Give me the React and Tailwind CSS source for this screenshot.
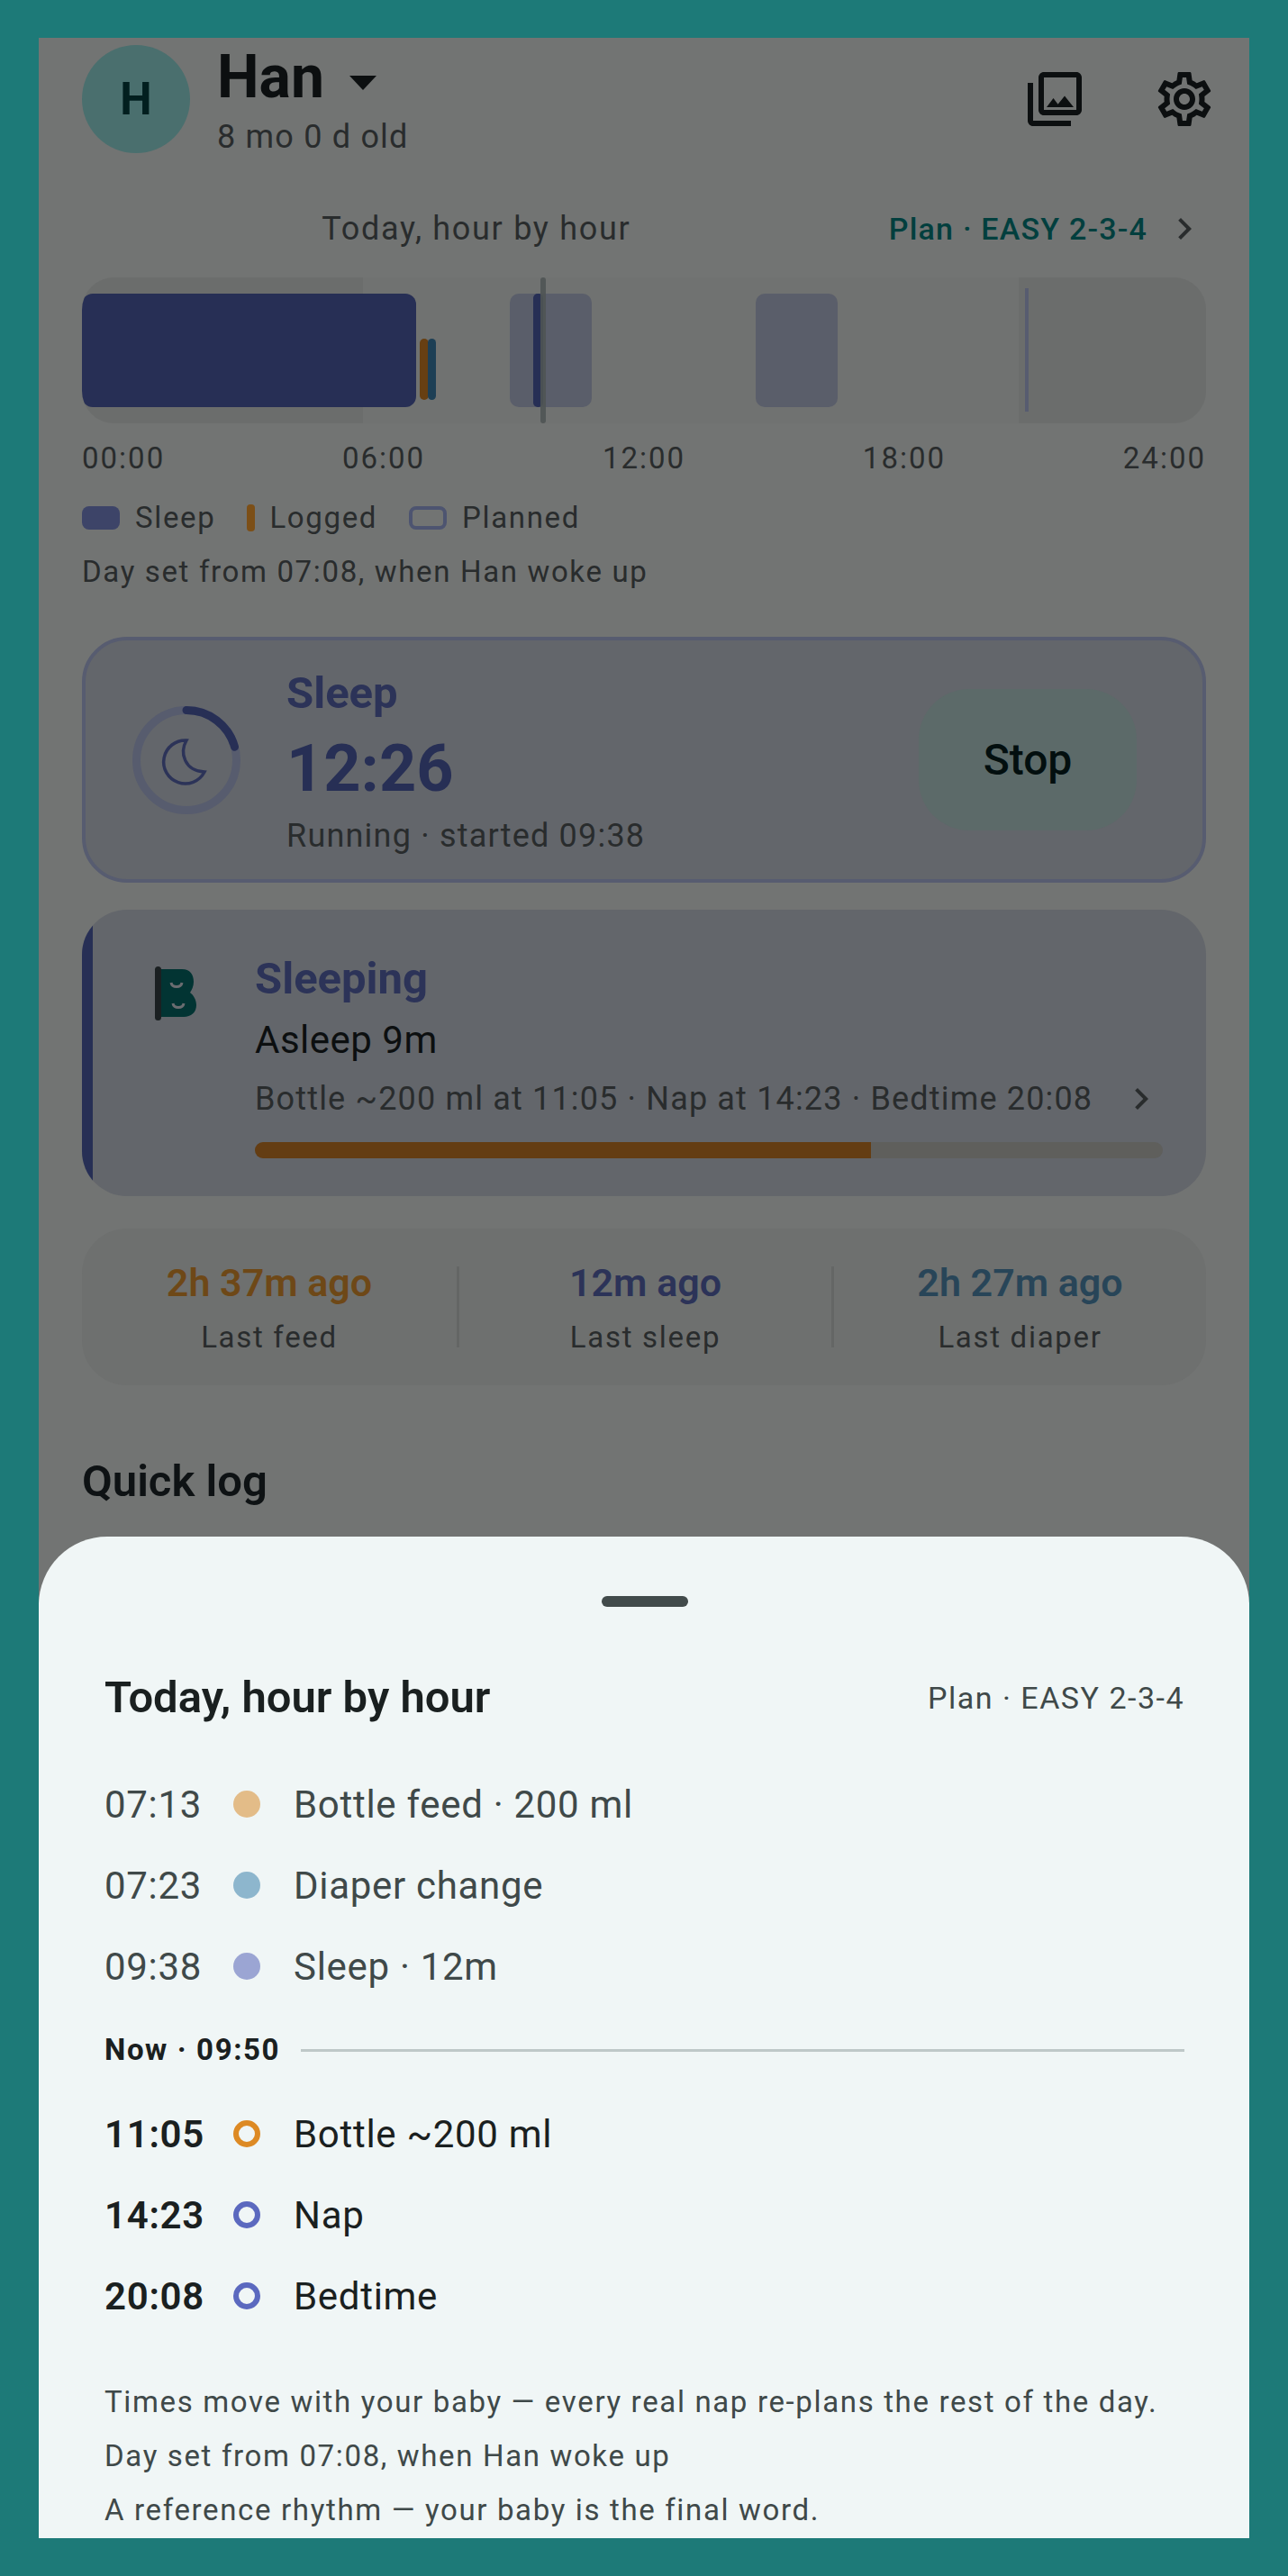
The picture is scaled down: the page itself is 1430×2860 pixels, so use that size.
import { MdOutlinePhotoLibrary, MdOutlineSettings, MdChevronRight } from "react-icons/md";

// --- Chart data (hours of the day, 24h = full track width) ---

const TRACK_WIDTH = 1248;
const PX_PER_HOUR = TRACK_WIDTH / 24;

const barStyle = (from, width) => ({
  left: `${from * PX_PER_HOUR}px`,
  width: `${width}px`,
});

const planned = [
  { id: "nap-1", from: 9.135, width: 91 },
  { id: "nap-2", from: 14.38, width: 91 },
];

const pastRows = [
  { time: "07:13", dot: "bg-[#e3bc88]", label: "Bottle feed · 200 ml" },
  { time: "07:23", dot: "bg-[#8db6cd]", label: "Diaper change" },
  { time: "09:38", dot: "bg-[#9ba5d3]", label: "Sleep · 12m" },
];

const nextRows = [
  { time: "11:05", ring: "border-[#dd8a24]", label: "Bottle ~200 ml" },
  { time: "14:23", ring: "border-[#5b69bf]", label: "Nap" },
  { time: "20:08", ring: "border-[#5b69bf]", label: "Bedtime" },
];

const stats = [
  { value: "2h 37m ago", label: "Last feed", color: "text-[#6e4817]" },
  { value: "12m ago", label: "Last sleep", color: "text-[#2c3358]" },
  { value: "2h 27m ago", label: "Last diaper", color: "text-[#284558]" },
];

// --- Pieces ---

const Timeline = () => (
  <div className="relative mt-[30px] h-[162px] overflow-hidden rounded-[36px] bg-[#707271]">
    <div className="absolute inset-y-0 left-0 w-[312px] bg-[#6b6d6c]" />
    <div className="absolute inset-y-0 right-0 w-[208px] bg-[#6b6d6c]" />
    {planned.map((p) => (
      <div key={p.id} className="absolute top-[18px] h-[126px] rounded-[10px] bg-[#5a5e6a]" style={barStyle(p.from, p.width)} />
    ))}
    <div className="absolute top-[18px] h-[126px] rounded-[12px] bg-[#272f55]" style={barStyle(0, 371)} />
    <div className="absolute top-[68px] h-[68px] rounded-[5px] bg-[#673f12]" style={barStyle(7.217, 10)} />
    <div className="absolute top-[68px] h-[68px] rounded-[5px] bg-[#1d3f55]" style={barStyle(7.383, 9)} />
    <div className="absolute top-[18px] h-[126px] rounded-[5px] bg-[#272f55]" style={barStyle(9.633, 11)} />
    <div className="absolute inset-y-0 rounded-[3px] bg-[#4f5454]/90" style={barStyle(9.79, 6)} />
    <div className="absolute top-[12px] h-[137px] bg-[#575c70]" style={barStyle(20.133, 4)} />
  </div>
);

const SleepingBaby = () => (
  <svg width="50" height="66" viewBox="0 0 50 66" className="mt-[60px] shrink-0">
    <path d="M9 6H32C41 6 45 12 45 20C45 25 43 29 41 32C45 35 48 40 48 46C48 54 42 59 34 59H9Z" fill="#023433" />
    <rect x="2" y="3" width="7" height="60" rx="3.5" fill="#1b2022" />
    <path d="M20 21C21 27 31 27 32 21" fill="none" stroke="#6a6c70" strokeWidth="3" />
    <path d="M22 44C23 50 33 50 34 44" fill="none" stroke="#6a6c70" strokeWidth="3" />
  </svg>
);

// --- Page ---

const App = () => {
  return (
    <div className="h-[2860px] bg-[#1d7a78] px-[43px] py-[42px] [font-family:Roboto,sans-serif]">
      <div className="flex h-[2776px] flex-col overflow-hidden bg-[#727473]">
        {/* Dimmed page behind the sheet */}
        <div className="min-h-0 flex-1 overflow-hidden px-[48px] pt-[8px]">
          {/* Header */}
          <div className="flex h-[120px]">
            <div className="flex h-[120px] w-[120px] shrink-0 items-center justify-center rounded-full bg-[#4a6f6e] text-[50px] font-bold text-[#021f1f]">
              H
            </div>
            <div className="ml-[30px] flex-1 pt-[4px]">
              <div className="flex h-[64px] items-center text-[66px] leading-[64px] font-bold text-[#0c0f10]">
                Han
                <svg width="30" height="16" viewBox="0 0 30 16" className="mt-[11px] ml-[28px]">
                  <path d="M0 0H30L15 16Z" fill="#0c0f10" />
                </svg>
              </div>
              <div className="mt-[12px] text-[36px] leading-[44px] tracking-[1.2px] text-[#292c2d]">8 mo 0 d old</div>
            </div>
            <MdOutlinePhotoLibrary size={72} className="mt-[24px] text-[#0c0f10]" />
            <MdOutlineSettings size={72} className="mt-[24px] -mr-[12px] ml-[72px] text-[#0c0f10]" />
          </div>

          {/* Title row */}
          <div className="mt-[60px] flex h-[48px] items-center">
            <div className="flex-1 text-center text-[36px] leading-[48px] tracking-[1.7px] text-[#292c2d]">Today, hour by hour</div>
            <div className="ml-[20px] text-[34px] leading-[48px] font-medium tracking-[1.2px] text-[#023f3e]">Plan · EASY 2-3-4</div>
            <MdChevronRight size={48} className="ml-[17px] text-[#292c2d]" />
          </div>

          <Timeline />

          {/* Axis */}
          <div className="mt-[19px] flex justify-between text-[33px] leading-[40px] tracking-[2px] text-[#292c2d]">
            <span>00:00</span>
            <span>06:00</span>
            <span>12:00</span>
            <span>18:00</span>
            <span>24:00</span>
          </div>

          {/* Legend */}
          <div className="mt-[26px] flex h-[40px] items-center text-[33px] leading-[40px] tracking-[1.65px] text-[#292c2d]">
            <span className="h-[26px] w-[42px] rounded-[8px] bg-[#3d4468]" />
            <span className="ml-[17px]">Sleep</span>
            <span className="ml-[35px] h-[30px] w-[9px] rounded-[4px] bg-[#7c4f17]" />
            <span className="ml-[16px]">Logged</span>
            <span className="ml-[35px] h-[26px] w-[42px] rounded-[8px] border-[4px] border-[#4d5470]" />
            <span className="ml-[17px]">Planned</span>
          </div>
          <div className="mt-[20px] text-[33px] leading-[40px] tracking-[1.65px] text-[#292c2d]">Day set from 07:08, when Han woke up</div>

          {/* Running timer */}
          <div className="mt-[52px] flex h-[273px] items-center rounded-[50px] border-[4px] border-[#575c70] bg-[#63666b] pr-[73px] pl-[52px]">
            <div className="relative h-[120px] w-[120px] shrink-0">
              <svg width="120" height="120" viewBox="0 0 120 120" className="-rotate-90">
                <circle cx="60" cy="60" r="55.5" fill="none" stroke="#575c6e" strokeWidth="9" />
                <circle cx="60" cy="60" r="55.5" fill="none" stroke="#272f55" strokeWidth="9" strokeLinecap="round" pathLength="100" strokeDasharray="20.7 100" />
              </svg>
              <svg width="120" height="120" viewBox="0 0 120 120" className="absolute inset-0">
                <path d="M60 38A24 24 0 1 0 80 73C58 72 52 52 60 38Z" fill="none" stroke="#2c3358" strokeWidth="3.5" />
              </svg>
            </div>
            <div className="ml-[51px] flex-1 pt-[5px]">
              <div className="text-[49px] leading-[56px] font-bold text-[#2c3358]">Sleep</div>
              <div className="mt-[16px] text-[72px] leading-[80px] font-bold text-[#272f55]">12:26</div>
              <div className="mt-[12px] text-[36px] leading-[44px] tracking-[1.2px] text-[#292c2d]">Running · started 09:38</div>
            </div>
            <div className="flex h-[157px] w-[242px] items-center justify-center rounded-[56px] bg-[#5c6a69] text-[48px] font-medium text-[#030f0f]">
              Stop
            </div>
          </div>

          {/* Next up */}
          <div className="mt-[30px] flex h-[318px] overflow-hidden rounded-[50px] bg-[#63666b]">
            <div className="w-[12px] shrink-0 bg-[#272f55]" />
            <div className="ml-[67px] shrink-0">
              <SleepingBaby />
            </div>
            <div className="ml-[63px] flex-1 pt-[49px] pr-[48px]">
              <div className="text-[49px] leading-[56px] font-bold text-[#2c3358]">Sleeping</div>
              <div className="mt-[14px] text-[42px] leading-[52px] tracking-[0.5px] text-[#0c0f10]">Asleep 9m</div>
              <div className="mt-[17px] flex h-[44px] items-center justify-between text-[36px] leading-[44px] tracking-[1.17px] text-[#292c2d]">
                <span>Bottle ~200 ml at 11:05 · Nap at 14:23 · Bedtime 20:08</span>
                <MdChevronRight size={48} className="text-[#292c2d]" />
              </div>
              <div className="mt-[26px] h-[18px] overflow-hidden rounded-[9px] bg-[#5f5f5c]">
                <div className="h-full bg-[#643d13]" style={{ width: `${(684 / 1008) * 100}%` }} />
              </div>
            </div>
          </div>

          {/* Since last */}
          <div className="mt-[36px] flex h-[174px] rounded-[50px] bg-[#6e706f] pt-[34px]">
            {stats.map((s, i) => (
              <div key={s.label} className="flex flex-1 items-start">
                {i > 0 && <div className="mt-[8px] h-[90px] w-[3px] bg-[#646665]" />}
                <div className="flex-1 text-center">
                  <div className={`text-[43px] leading-[52px] font-semibold ${s.color}`}>{s.value}</div>
                  <div className="mt-[15px] text-[33px] leading-[40px] tracking-[1.7px] text-[#292c2d]">{s.label}</div>
                </div>
              </div>
            ))}
          </div>

          <div className="mt-[79px] text-[49px] leading-[56px] font-semibold text-[#0e1214]">Quick log</div>
        </div>

        {/* Bottom sheet */}
        <div className="h-[1112px] shrink-0 rounded-t-[76px] bg-[#f0f6f6] px-[73px] pt-[66px] pr-[72px]">
          <div className="mx-auto h-[12px] w-[96px] rounded-full bg-[#424b4b]" />
          <div className="mt-[73px] flex items-center justify-between">
            <div className="text-[49px] leading-[56px] font-semibold text-[#1a2020]">Today, hour by hour</div>
            <div className="text-[34px] leading-[48px] tracking-[1.5px] text-[#3f4949]">Plan · EASY 2-3-4</div>
          </div>

          <div className="mt-[45px]">
            {pastRows.map((r) => (
              <div key={r.time} className="flex h-[90px] items-center text-[42px] tracking-[0.7px] text-[#3f4949]">
                <span className="w-[143px] shrink-0">{r.time}</span>
                <span className={`h-[30px] w-[30px] rounded-full ${r.dot}`} />
                <span className="ml-[37px]">{r.label}</span>
              </div>
            ))}
          </div>

          <div className="mt-[18px] flex h-[60px] items-center">
            <span className="text-[33px] font-bold tracking-[1.6px] text-[#1a2020]">Now · 09:50</span>
            <div className="ml-[23px] h-[3px] flex-1 bg-[#bec8c8]" />
          </div>

          <div className="mt-[18px]">
            {nextRows.map((r) => (
              <div key={r.time} className="flex h-[90px] items-center text-[42px] tracking-[0.7px] text-[#1a2020]">
                <span className="w-[143px] shrink-0 font-semibold">{r.time}</span>
                <span className={`h-[30px] w-[30px] rounded-full border-[6px] ${r.ring}`} />
                <span className="ml-[37px]">{r.label}</span>
              </div>
            ))}
          </div>

          <div className="mt-[43px] text-[33px] leading-[60px] tracking-[1.65px] text-[#3f4949]">
            <div>Times move with your baby — every real nap re-plans the rest of the day.</div>
            <div>Day set from 07:08, when Han woke up</div>
            <div>A reference rhythm — your baby is the final word.</div>
          </div>
        </div>
      </div>
    </div>
  );
};

export default App;
